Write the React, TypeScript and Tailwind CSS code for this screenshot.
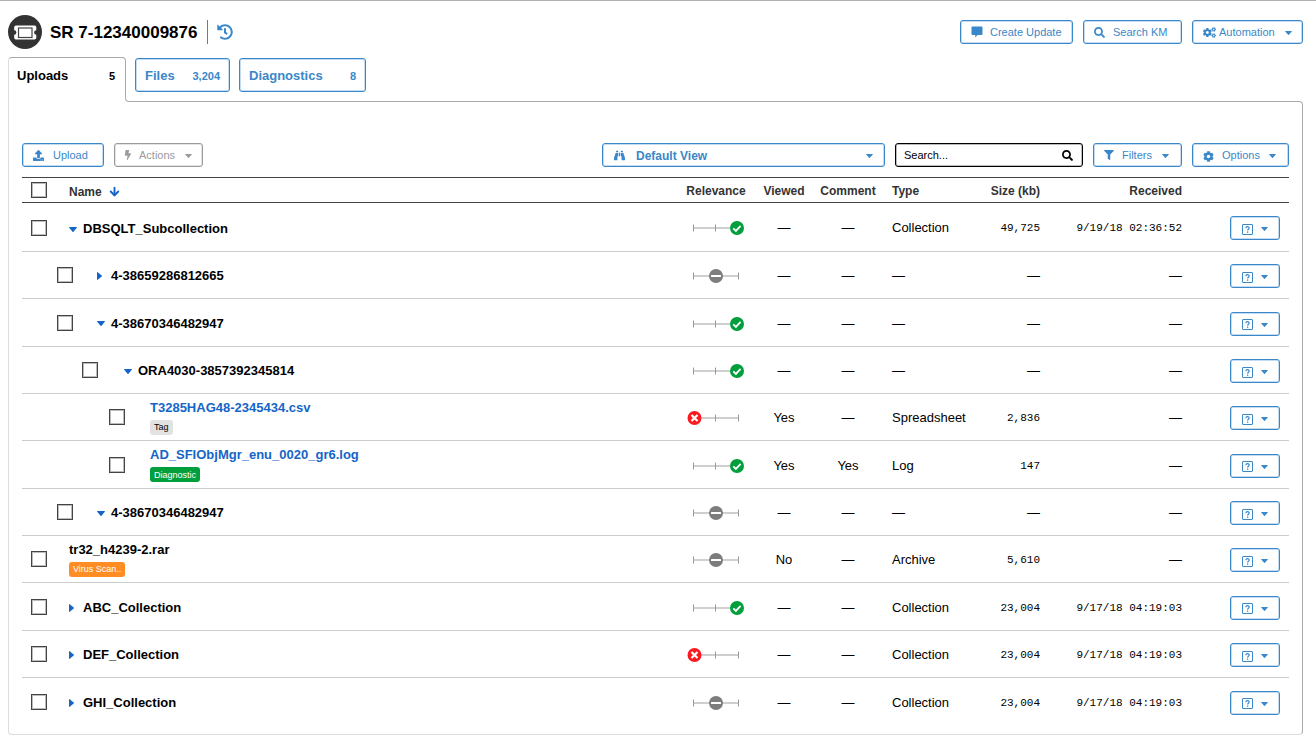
import clsx from "clsx";
import { ArrowDown } from "lucide-react";
import type { ReactNode } from "react";
import {
  FaBinoculars,
  FaBolt,
  FaCog,
  FaCogs,
  FaFilter,
  FaHistory,
  FaSearch,
  FaUpload,
} from "react-icons/fa";

type Relevance = "high" | "medium" | "low";

type Row = {
  name: string;
  level: 0 | 1 | 2 | 3;
  toggle?: "open" | "closed";
  link?: boolean;
  tag?: { label: string; tone: "plain" | "green" | "orange" };
  relevance: Relevance;
  viewed?: string;
  comment?: string;
  type?: string;
  size?: string;
  received?: string;
};

const ROWS: Row[] = [
  { name: "DBSQLT_Subcollection", level: 0, toggle: "open", relevance: "high", type: "Collection", size: "49,725", received: "9/19/18 02:36:52" },
  { name: "4-38659286812665", level: 1, toggle: "closed", relevance: "medium" },
  { name: "4-38670346482947", level: 1, toggle: "open", relevance: "high" },
  { name: "ORA4030-3857392345814", level: 2, toggle: "open", relevance: "high" },
  { name: "T3285HAG48-2345434.csv", level: 3, link: true, tag: { label: "Tag", tone: "plain" }, relevance: "low", viewed: "Yes", type: "Spreadsheet", size: "2,836" },
  { name: "AD_SFIObjMgr_enu_0020_gr6.log", level: 3, link: true, tag: { label: "Diagnostic", tone: "green" }, relevance: "high", viewed: "Yes", comment: "Yes", type: "Log", size: "147" },
  { name: "4-38670346482947", level: 1, toggle: "open", relevance: "medium" },
  { name: "tr32_h4239-2.rar", level: 0, tag: { label: "Virus Scan..", tone: "orange" }, relevance: "medium", viewed: "No", type: "Archive", size: "5,610" },
  { name: "ABC_Collection", level: 0, toggle: "closed", relevance: "high", type: "Collection", size: "23,004", received: "9/17/18 04:19:03" },
  { name: "DEF_Collection", level: 0, toggle: "closed", relevance: "low", type: "Collection", size: "23,004", received: "9/17/18 04:19:03" },
  { name: "GHI_Collection", level: 0, toggle: "closed", relevance: "medium", type: "Collection", size: "23,004", received: "9/17/18 04:19:03" },
];

const INDENT = {
  0: "pl-[9px] gap-[22px]",
  1: "pl-[35px] gap-6",
  2: "pl-[60px] gap-[26px]",
  3: "pl-[87px] gap-[25px]",
};

const TONE = {
  plain: "bg-[#e2e2e2] text-black",
  green: "bg-[#009f3c] text-white",
  orange: "bg-[#ff8d24] text-white",
};

const Button = ({
  children,
  className,
  disabled,
  label,
}: {
  children: ReactNode;
  className?: string;
  disabled?: boolean;
  label?: string;
}) => (
  <button
    type="button"
    disabled={disabled}
    aria-label={label}
    className={clsx(
      "flex h-6 shrink-0 items-center rounded-[3px] border bg-white text-[11px] leading-4",
      disabled
        ? "border-[#9b9b9b] text-[#9b9b9b] shadow-[inset_0_0_0_1px_#e4e4e4]"
        : "border-[#3a87c9] text-[#3a87c9] shadow-[inset_0_0_0_1px_#c3dcf2]",
      className,
    )}
  >
    {children}
  </button>
);

const Checkbox = ({ label }: { label: string }) => (
  <input
    type="checkbox"
    aria-label={label}
    className="block size-4 shrink-0 appearance-none border border-[#444] bg-white shadow-[inset_0_0_0_1px_#bbb] checked:bg-[#3a87c9]"
  />
);

const Caret = ({ className }: { className?: string }) => (
  <svg viewBox="0 0 7 4" className={clsx("mt-[2px] h-1 w-[7px] shrink-0", className)} fill="currentColor" aria-hidden="true">
    <path d="M.4 0h6.200a.3.3 0 0 1 .2.500L3.900 3.800a.5.5 0 0 1-.8 0L.2.500A.3.3 0 0 1 .4 0z" />
  </svg>
);

const TreeCaret = ({ open }: { open: boolean }) =>
  open ? (
    <svg viewBox="0 0 8 5" className="h-[5px] w-2" fill="currentColor" aria-hidden="true">
      <path d="M.5 0h7a.4.4 0 0 1 .3.700L4.500 4.700a.7.7 0 0 1-1 0L.2.700A.4.4 0 0 1 .5 0z" />
    </svg>
  ) : (
    <svg viewBox="0 0 5 8" className="h-2 w-[5px]" fill="currentColor" aria-hidden="true">
      <path d="M0 .5v7a.4.4 0 0 0 .7.300L4.700 4.500a.7.7 0 0 0 0-1L.7.200A.4.4 0 0 0 0 .5z" />
    </svg>
  );

const CommentIcon = () => (
  <svg viewBox="0 0 12 12" className="mr-[7px] size-3" fill="currentColor" aria-hidden="true">
    <path d="M1.500.500h9a1 1 0 0 1 1 1v6.500a1 1 0 0 1-1 1H6.500L4.200 11.500V9H1.500a1 1 0 0 1-1-1V1.500a1 1 0 0 1 1-1z" />
  </svg>
);

const TicketLogo = () => (
  <svg viewBox="0 0 34 34" className="size-[34px] shrink-0" aria-hidden="true">
    <circle cx="17" cy="17" r="17" fill="#333" />
    <path
      d="M8 10.500h18.500a1.800 1.800 0 0 1 1.800 1.800v3a2.200 2.200 0 0 0 0 4.400v3a1.800 1.800 0 0 1-1.800 1.800H8a1.800 1.800 0 0 1-1.800-1.800v-3a2.200 2.200 0 0 0 0-4.400v-3A1.800 1.800 0 0 1 8 10.500z"
      fill="#fff"
    />
    <rect x="10.500" y="13" width="13.500" height="9.500" fill="#fff" stroke="#444" strokeWidth="1.200" />
  </svg>
);

const HelpIcon = () => (
  <svg viewBox="0 0 11 11" className="mt-[2px] size-[11px]" fill="none" stroke="currentColor" aria-hidden="true">
    <rect x="0.500" y="0.500" width="10" height="10" rx="0.500" />
    <path d="M3.900 4.200c0-2 3.300-2 3.300-.1 0 1.100-1.600 1.100-1.600 2.400" strokeWidth="1.200" />
    <path d="M5.600 7.500v1.300" strokeWidth="1.300" />
  </svg>
);

const RelevanceScale = ({ value }: { value: Relevance }) => (
  <svg viewBox="0 0 60 16" className="mx-auto block h-4 w-[60px]" role="img" aria-label={value}>
    <rect x="8" y="7" width="45" height="2" fill="#cfcfcf" />
    <path d="M7.500 4.500v7M29.500 4.500v7M52.500 4.500v7" stroke="#999" />
    {value === "high" && (
      <>
        <circle cx="51" cy="8" r="7" fill="#009f3c" />
        <path d="M47.300 8.400l2.600 2.500 4.700-5" fill="none" stroke="#fff" strokeWidth="1.900" />
      </>
    )}
    {value === "medium" && (
      <>
        <circle cx="30" cy="8" r="7" fill="#7d7d7d" />
        <rect x="25" y="7" width="10" height="2" rx="0.500" fill="#fff" />
      </>
    )}
    {value === "low" && (
      <>
        <circle cx="8.500" cy="8" r="7" fill="#fb1a1f" />
        <path d="M5.500 5l6 6M11.500 5l-6 6" stroke="#fff" strokeWidth="2.200" />
      </>
    )}
  </svg>
);

const NameCell = ({ row }: { row: Row }) => (
  <div className={clsx("flex items-center", INDENT[row.level])}>
    <Checkbox label={`Select ${row.name}`} />
    {row.toggle ? (
      <button type="button" aria-expanded={row.toggle === "open"} className="flex items-center pt-[2px] font-bold">
        <span className="w-[14px] text-[#1565c8]">
          <TreeCaret open={row.toggle === "open"} />
        </span>
        {row.name}
      </button>
    ) : (
      <div className="flex flex-col items-start gap-1">
        {row.link ? (
          <a href="#" className="leading-4 font-bold text-[#1565c8]">{row.name}</a>
        ) : (
          <span className="leading-4 font-bold">{row.name}</span>
        )}
        {row.tag && (
          <span
            className={clsx(
              "flex h-[15px] items-center rounded-[3px] px-1 pt-px text-[9px] leading-none",
              TONE[row.tag.tone],
            )}
          >
            {row.tag.label}
          </span>
        )}
      </div>
    )}
  </div>
);

const MONO = "font-['Liberation_Mono',monospace] text-[11px]";

export default function App() {
  return (
    <div className="border-t border-[#b0b0b0] bg-white pr-[13px] pb-[14px] pl-2 font-['Liberation_Sans',Arial,sans-serif] text-[13px] leading-4 text-black">
      <header className="flex items-center pt-[14px]">
        <TicketLogo />
        <h1 className="ml-2 pt-[2px] text-[17px] font-bold">SR 7-12340009876</h1>
        <div className="ml-[10px] h-6 w-px bg-[#3a87c9]" />
        <button type="button" aria-label="History" className="ml-[9px] text-[#3a87c9]">
          <FaHistory className="size-4" />
        </button>
        <div className="ml-auto flex gap-[10px]">
          <Button className="w-[113px] pl-[10px]">
            <CommentIcon />
            Create Update
          </Button>
          <Button className="w-[99px] pl-[10px]">
            <FaSearch className="mr-2 size-[11px]" />
            Search KM
          </Button>
          <Button className="w-[111px] pl-[10px]">
            <FaCogs className="mr-[3px] size-[13px]" />
            Automation
            <Caret className="mr-[10px] ml-auto" />
          </Button>
        </div>
      </header>

      <nav className="mt-2 flex items-start text-[13px] font-bold">
        <button
          type="button"
          className="relative z-10 flex h-10 w-[118px] items-center justify-between rounded-t-[4px] border border-b-0 border-[#aaa] border-l-[#ddd] bg-white pr-[10px] pb-1 pl-2 before:absolute before:top-full before:-right-1 before:-left-px before:h-[5px] before:border-l before:border-[#ddd] before:bg-white after:absolute after:top-full after:left-full after:size-[5px] after:rounded-bl-[4px] after:border-b after:border-l after:border-[#aaa]"
        >
          Uploads
          <span className="text-[11px]">5</span>
        </button>
        <button
          type="button"
          className="mt-px ml-[9px] flex h-[34px] w-[95px] items-center justify-between rounded-[3px] border border-[#3a87c9] px-[9px] pt-[2px] text-[#3a87c9] shadow-[inset_0_0_0_1px_#c3dcf2]"
        >
          Files
          <span className="text-[11px]">3,204</span>
        </button>
        <button
          type="button"
          className="mt-px ml-[9px] flex h-[34px] w-[127px] items-center justify-between rounded-[3px] border border-[#3a87c9] px-[9px] pt-[2px] text-[#3a87c9] shadow-[inset_0_0_0_1px_#c3dcf2]"
        >
          Diagnostics
          <span className="text-[11px]">8</span>
        </button>
      </nav>

      <main className="mt-1 rounded-[4px] rounded-tl-none border border-[#aaa] border-b-[#ddd] border-l-[#ddd] px-[13px] pt-[41px] pb-[9px]">
        <div className="flex gap-[10px]">
          <Button className="w-[82px] pl-[10px]">
            <FaUpload className="mr-[9px] size-[11px]" />
            Upload
          </Button>
          <Button className="w-[89px] pl-2" disabled>
            <FaBolt className="mr-[6px] h-[10px] w-[10px]" />
            Actions
            <Caret className="mr-[10px] ml-auto" />
          </Button>

          <div className="relative ml-auto w-[283px] text-[#3a87c9]">
            <FaBinoculars className="absolute top-[7px] left-3 size-[11px]" />
            <select
              aria-label="View"
              className="block h-6 w-full appearance-none rounded-[3px] border border-[#3a87c9] pt-px pl-[33px] text-[12px] leading-4 font-bold shadow-[inset_0_0_0_1px_#c3dcf2]"
            >
              <option>Default View</option>
            </select>
            <Caret className="pointer-events-none absolute top-[9px] right-3" />
          </div>
          <div className="relative w-[188px]">
            <input
              type="text"
              aria-label="Search"
              placeholder="Search..."
              className="block h-6 w-full rounded-[3px] border border-black px-2 text-[11px] leading-4 shadow-[inset_0_0_0_1px_#bbb] placeholder:text-black"
            />
            <FaSearch className="absolute top-[7px] right-[10px] size-[11px]" />
          </div>
          <Button className="w-[89px] pl-[10px]">
            <FaFilter className="mr-2 size-[10px]" />
            Filters
            <Caret className="mr-3 ml-auto" />
          </Button>
          <Button className="w-[97px] pl-[10px]">
            <FaCog className="mt-[2px] mr-2 size-[11px]" />
            Options
            <Caret className="mr-3 ml-auto" />
          </Button>
        </div>

        <table className="mt-[10px] w-full table-fixed border-separate border-spacing-0">
          <colgroup>
            <col />
            <col className="w-[72px]" />
            <col className="w-16" />
            <col className="w-16" />
            <col className="w-[95px]" />
            <col className="w-[65px]" />
            <col className="w-[142px]" />
            <col className="w-[107px]" />
          </colgroup>
          <thead>
            <tr className="h-[26px] text-[12px] text-[#333] *:border-y *:border-[#444] *:p-0 *:not-first:pt-[2px]">
              <th>
                <div className="flex items-center gap-[22px] pl-[9px]">
                  <Checkbox label="Select all" />
                  <button type="button" className="flex items-center gap-[6px] pt-[3px] font-bold">
                    Name
                    <ArrowDown className="size-[13px] text-[#1565c8]" strokeWidth={3.5} />
                  </button>
                </div>
              </th>
              <th>Relevance</th>
              <th>Viewed</th>
              <th>Comment</th>
              <th className="text-left"><span className="pl-3">Type</span></th>
              <th className="text-right">Size (kb)</th>
              <th className="text-right">Received</th>
              <th aria-label="Row actions" />
            </tr>
          </thead>
          <tbody>
            {ROWS.map((row, i) => (
              <tr
                key={i}
                className="h-[47px] *:border-b *:border-[#ccc] *:p-0 *:not-first:pt-[2px] first:h-[49px] first:*:pt-[2px] nth-[3n]:h-12 last:*:border-b-0"
              >
                <td><NameCell row={row} /></td>
                <td><RelevanceScale value={row.relevance} /></td>
                <td className="text-center">{row.viewed ?? "—"}</td>
                <td className="text-center">{row.comment ?? "—"}</td>
                <td><span className="pl-3">{row.type ?? "—"}</span></td>
                <td className={clsx("text-right", row.size && MONO)}>{row.size ?? "—"}</td>
                <td className={clsx("text-right", row.received && MONO)}>{row.received ?? "—"}</td>
                <td>
                  <Button className="ml-12 w-[50px] gap-2 pl-[11px]" label={`Actions for ${row.name}`}>
                    <HelpIcon />
                    <Caret />
                  </Button>
                </td>
              </tr>
            ))}
          </tbody>
        </table>
      </main>
    </div>
  );
}
